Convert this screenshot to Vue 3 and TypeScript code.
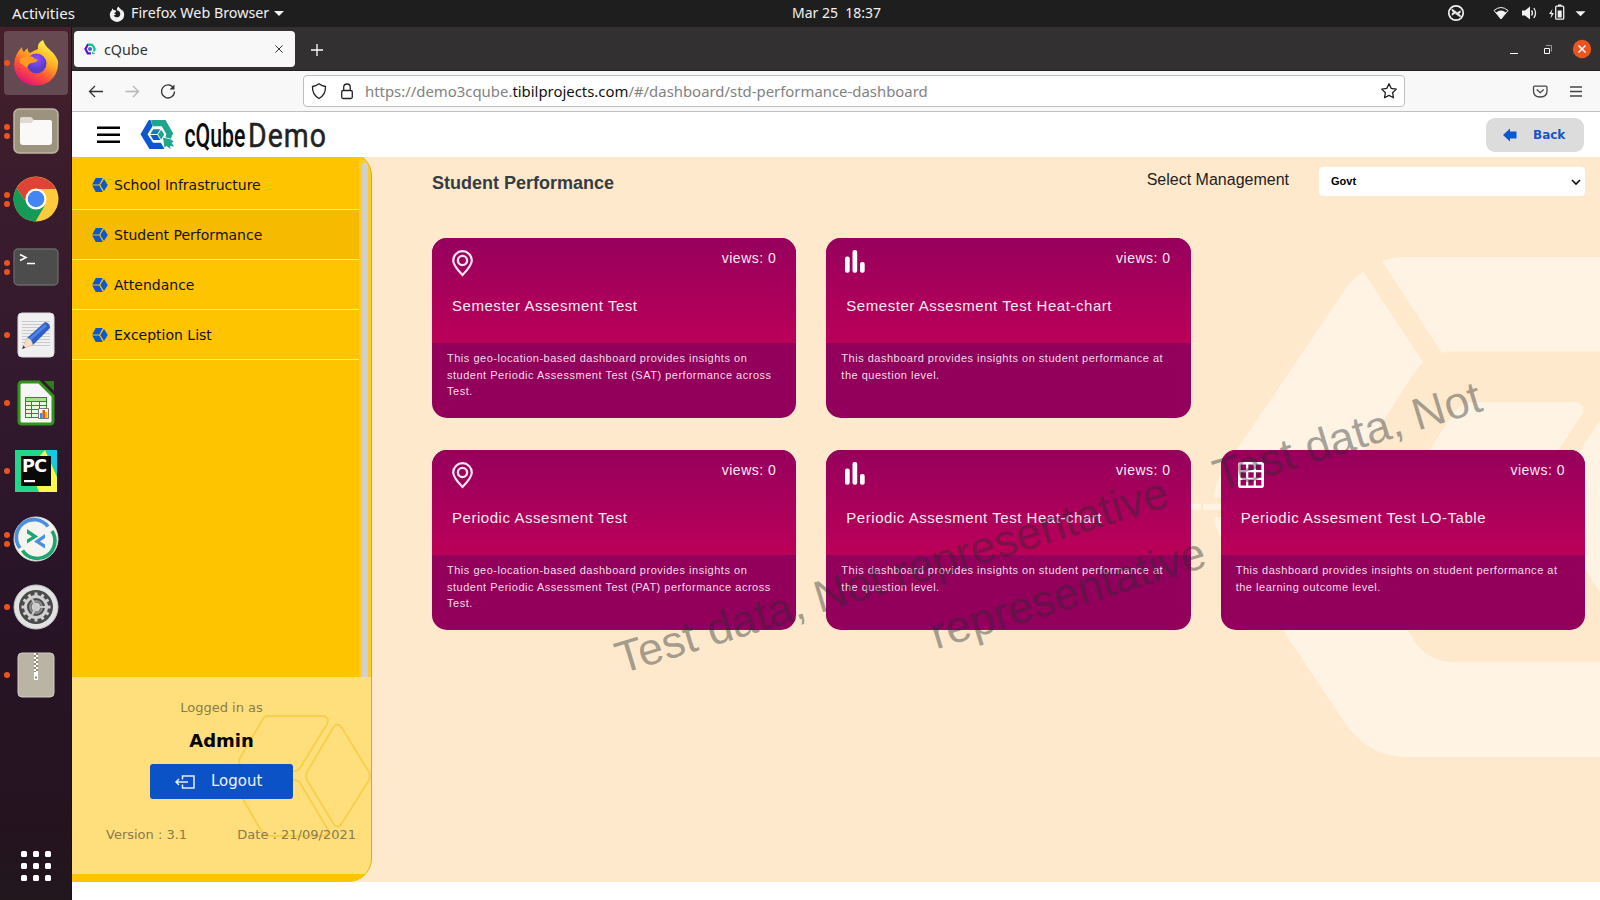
<script setup lang="ts">
interface DockApp { id: string; dots: number }
interface Card { icon: 'pin' | 'bars' | 'grid'; title: string; text: string; views: number }

const dock: DockApp[] = [
  { id: 'firefox', dots: 1 }, { id: 'files', dots: 2 }, { id: 'chrome', dots: 2 },
  { id: 'terminal', dots: 2 }, { id: 'writer', dots: 1 }, { id: 'calc', dots: 1 },
  { id: 'pycharm', dots: 1 }, { id: 'remmina', dots: 2 }, { id: 'settings', dots: 1 },
  { id: 'archive', dots: 1 },
]
const menu: string[] = ['School Infrastructure', 'Student Performance', 'Attendance', 'Exception List']
const active = 'Student Performance'

const rows: Card[][] = [
  [
    { icon: 'pin', title: 'Semester Assesment Test', views: 0, text: 'This geo-location-based dashboard provides insights on student Periodic Assessment Test (SAT) performance across Test.' },
    { icon: 'bars', title: 'Semester Assesment Test Heat-chart', views: 0, text: 'This dashboard provides insights on student performance at the question level.' },
  ],
  [
    { icon: 'pin', title: 'Periodic Assesment Test', views: 0, text: 'This geo-location-based dashboard provides insights on student Periodic Assessment Test (PAT) performance across Test.' },
    { icon: 'bars', title: 'Periodic Assesment Test Heat-chart', views: 0, text: 'This dashboard provides insights on student performance at the question level.' },
    { icon: 'grid', title: 'Periodic Assesment Test LO-Table', views: 0, text: 'This dashboard provides insights on student performance at the learning outcome level.' },
  ],
]
const teeth: number[] = Array.from({ length: 12 }, (_, i) => i * 30)
</script>

<template>
  <div class="screen">
    <header class="topbar">
      <span class="activities">Activities</span>
      <svg class="ff-mini" viewBox="0 0 16 16"><path d="M3.2 2.2 2.8 4.4C1.6 5.4.8 7 .8 8.7a7.2 7.2 0 0 0 14.4 0c0-2.2-.8-3.8-2-5l.2 1.5C12.500 3 10 2.500 9.600.6 8.200 1.600 7.700 3 8 4.200c2 .4 3.300 1.700 3.300 3.800a3.500 3.500 0 0 1-6.800 1c.8.5 1.900.4 2.600-.4-1.300-.1-1.800-.9-1.500-1.800l1.700-1-.9-1.500-1.900-.4z" fill="#f2f2f2" /></svg>
      <span class="appname">Firefox Web Browser</span>
      <svg class="caret" viewBox="0 0 10 5"><path d="M0 0h10L5 5z" fill="#f2f2f2" /></svg>
      <span class="clock">Mar 25&nbsp; 18:37</span>
      <svg class="tray" viewBox="0 0 150 27" fill="none" stroke="#f2f2f2">
        <circle cx="16" cy="13" r="7.200" stroke-width="1.700" />
        <path d="M12 9l4.800 3.200-4.800 3v-1.800l2-1.200-2-1.300zM20.300 10.800v1.800l-2 1.300 2 1.200V17l-4.800-3.200z" fill="#f2f2f2" stroke-width=".6" />
        <path d="M54 10.500Q61 4.500 68 10.500L61 19z" stroke-width="1" />
        <path d="M56 12.500Q61 8.500 66 12.500L61 19z" fill="#f2f2f2" stroke="none" />
        <path d="M82 10.500h3l5-4v13l-5-4h-3z" fill="#f2f2f2" stroke="none" />
        <path d="M91.500 10.500q2 2.500 0 5M93.800 8q3.500 5 0 10" stroke-width="1.300" />
        <path d="M112.500 9l-3.500 5h2.500l-1 4.500 3.500-5.500h-2.500z" fill="#f2f2f2" stroke="none" />
        <rect x="115.700" y="6.200" width="8" height="13" rx="1" stroke-width="1.300" />
        <path d="M117.700 10.500h4v7h-4zM118 4.500h3.500v1.500H118z" fill="#f2f2f2" stroke="none" />
        <path d="M135.500 11.200h10l-5 5z" fill="#f2f2f2" stroke="none" />
      </svg>
    </header>

    <div class="below">
      <nav class="dock">
        <div v-for="app in dock" :key="app.id" class="slot" :class="{ focused: app.id === 'firefox' }">
          <span class="dots"><i v-for="n in app.dots" :key="n" /></span>
          <svg viewBox="0 0 46 46" class="app-icon">
            <g v-if="app.id === 'firefox'">
              <defs>
                <linearGradient id="fx" x1=".8" y1=".1" x2=".3" y2="1"><stop offset="0" stop-color="#fff04a" /><stop offset=".35" stop-color="#ffb023" /><stop offset=".65" stop-color="#ff5634" /><stop offset="1" stop-color="#e3107a" /></linearGradient>
                <radialGradient id="fg" cx=".5" cy=".3"><stop offset="0" stop-color="#9250ff" /><stop offset="1" stop-color="#5a3ccc" /></radialGradient>
              </defs>
              <path d="M9 7Q9 11 11 12Q13 9 15 8Q14 11 17 13Q20 11 25 9Q24 3 30 0Q32 6 36 9L38 11Q42 14 45 21Q46 34 36 42Q23 49 10 42Q1 35 1 24Q2 14 9 7z" fill="url(#fx)" />
              <circle cx="23.500" cy="23.500" r="10" fill="url(#fg)" />
              <path d="M7 19Q13 14 20 17Q22 20 25 20Q23 23 18 23Q15 24 14 28Q11 25 7 23z" fill="#ff9a20" />
            </g>
            <g v-else-if="app.id === 'files'">
              <rect x="1" y="1" width="44" height="44" rx="5" fill="#9c937f" stroke="#bdb6a2" stroke-width="1.500" />
              <path d="M7 19V11q0-2 2-2h9l4 4h14q3 0 3 3z" fill="#dedad0" />
              <path d="M7 15h11l3-3h16q2 0 2 2v20q0 3-3 3H10q-3 0-3-3z" fill="#faf9f7" />
            </g>
            <g v-else-if="app.id === 'chrome'">
              <circle cx="23" cy="23" r="22.500" fill="#ffcb3c" />
              <path d="M3.500 12A22.500 22.500 0 0 1 43 13H23A10.500 10.500 0 0 0 13 26z" fill="#dd4437" />
              <path d="M3.500 12A22.500 22.500 0 0 0 22.500 45.500L32 29Q25 36 17 31Q14 29 13 26z" fill="#159a57" />
              <circle cx="23" cy="23" r="10.500" fill="#fff" /><circle cx="23" cy="23" r="8.300" fill="#4285f4" />
            </g>
            <g v-else-if="app.id === 'terminal'">
              <rect x="1" y="5" width="44" height="36" rx="4" fill="#4c4c4c" stroke="#686868" stroke-width="1.300" />
              <path d="M7 10.500l6 3-6 3M14 19.500h8" fill="none" stroke="#fff" stroke-width="1.600" />
            </g>
            <g v-else-if="app.id === 'writer'">
              <rect x="5" y="1" width="36" height="44" rx="4" fill="#f0f0f0" stroke="#dcdcdc" />
              <path d="M9 9.500h28M9 12.500h28M9 15.500h28M9 18.500h28M9 21.500h28M9 24.500h28M9 27.500h28M9 30.500h28M9 33.500h28" stroke="#cacaca" />
              <path d="M9 37l5-11 18-16q5 1 5 6L20 33z" fill="#2d5fc4" />
              <path d="M16 28l17-15" stroke="#4f83e6" stroke-width="3" /><path d="M9 37l5-11q5 1 6 7z" fill="#fbdcbf" /><path d="M9 37l1.400-3.200 2 1.700z" fill="#333" />
            </g>
            <g v-else-if="app.id === 'calc'">
              <path d="M9 2h17l14 14v25q0 3-3 3H9q-3 0-3-3V5q0-3 3-3z" fill="#f6f6f6" stroke="#32931d" stroke-width="3" />
              <path d="M31 1h10v10z" fill="#2a7f19" />
              <path d="M12 17h22v21H12z" fill="#2f8c1e" />
              <path d="M13 18h20v3H13z" fill="#a4e388" />
              <path d="M13 22h5v3h-5zM19 22h7v3h-7zM27 22h6v3h-6zM13 26h5v3h-5zM19 26h7v3h-7zM27 26h6v3h-6zM13 30h5v3h-5zM19 30h7v3h-7zM13 34h5v3h-5zM19 34h7v3h-7z" fill="#e8fbe0" />
              <path d="M25.500 28.500h10v10h-10z" fill="#fff" stroke="#777" />
              <path d="M27 33h2.500v5H27z" fill="#2196f3" /><path d="M29.500 30h2.500v8h-2.500z" fill="#e4571b" /><path d="M32 32h2.500v6H32z" fill="#ffb300" />
            </g>
            <g v-else-if="app.id === 'pycharm'">
              <path d="M2 2h42v42H2z" fill="#21d789" /><path d="M16 20L32 2l12 27v15H26z" fill="#fcf84a" /><path d="M33 2h11v24z" fill="#12c9e6" />
              <path d="M8 8h30v30H8z" fill="#090909" />
              <text x="9" y="24" class="pc">PC</text>
              <path d="M11 32h11v2.200H11z" fill="#fff" />
            </g>
            <g v-else-if="app.id === 'remmina'">
              <circle cx="23" cy="23" r="22" fill="#f6f4ef" stroke="#dedbd2" />
              <g fill="none" stroke-width="3.600"><path d="M7 32A17.500 17.500 0 0 1 35 10.500" stroke="#4a90df" /><path d="M39 15A17.500 17.500 0 0 1 9.500 34.500" stroke="#1da672" /></g>
              <path d="M14 13l11 7.500-11 7v-4l5-3-5-3z" fill="#1da672" /><path d="M32 18v4l-5 3.500 5 3v4l-11-7z" fill="#4a90df" />
            </g>
            <g v-else-if="app.id === 'settings'">
              <circle cx="23" cy="23" r="22" fill="#e2e2e2" stroke="#c5c5c5" /><circle cx="23" cy="23" r="17" fill="#4a4a4a" />
              <path v-for="a in teeth" :key="a" d="M21.500 8.500h3v4h-3z" :transform="`rotate(${a} 23 23)`" fill="#d0d0d0" />
              <circle cx="23" cy="23" r="10.500" fill="none" stroke="#d0d0d0" stroke-width="3" />
              <circle cx="23" cy="23" r="6" fill="none" stroke="#8c8c8c" stroke-width="2" />
              <circle cx="23" cy="23" r="4.500" fill="#cfcfcf" /><path d="M23 23l-4-8M23 23h9M23 23l-4 8" stroke="#c8c8c8" stroke-width="2" />
            </g>
            <g v-else>
              <rect x="5" y="1" width="36" height="44" rx="4" fill="#bab4a5" stroke="#d3cec2" />
              <path d="M21 1h4v20h-4z" fill="#8d8778" /><path d="M21 1h2v2h-2zM23 3h2v2h-2zM21 5h2v2h-2zM23 7h2v2h-2zM21 9h2v2h-2zM23 11h2v2h-2zM21 13h2v2h-2zM23 15h2v2h-2zM21 17h2v2h-2zM23 19h2v2h-2z" fill="#fff" />
              <path d="M21 20h4v8h-4z" fill="#fff" /><path d="M22 24.500h2v2h-2z" fill="#8d8778" />
            </g>
          </svg>
        </div>
        <div class="launcher"><i v-for="n in 9" :key="n" /></div>
      </nav>

      <section class="browser">
        <div class="tabstrip">
          <div class="tab">
            <svg viewBox="0 0 12 12" class="favicon"><path d="M7 1.800H3.800L1.400 6l2.400 4.300H7" fill="none" stroke="#5a14d2" stroke-width="2.200" /><path d="M4 1.800h4.300L10.700 6l-.8 2.500" fill="none" stroke="#1bbf9a" stroke-width="2.200" /><path d="M8 8.500l3.500 2.500H8z" fill="#1bbf9a" /><circle cx="6" cy="6" r="2" fill="#3a64cf" /></svg>
            <span>cQube</span>
            <svg viewBox="0 0 8 8" class="tab-x"><path d="M.4.4l7.200 7.200M7.600.4L.4 7.600" stroke="#333" /></svg>
          </div>
          <svg viewBox="0 0 12 12" class="plus"><path d="M6 0v12M0 6h12" stroke="#fff" stroke-width="1.300" /></svg>
          <div class="win">
            <svg viewBox="0 0 90 20"><path d="M4 14.500h8" stroke="#fff" /><path d="M38.500 9.500h5v5h-5z" fill="none" stroke="#fff" /><path d="M40 6.500h5.500v6" fill="none" stroke="#999" /><circle cx="76" cy="10" r="9.200" fill="#e95420" /><path d="M72.500 6.500l7 7M79.500 6.500l-7 7" stroke="#fff" stroke-width="1.500" /></svg>
          </div>
        </div>

        <div class="toolbar">
          <svg class="nav" viewBox="0 0 110 40" fill="none" stroke="#333" stroke-width="1.300">
            <path d="M17.500 20.500h13.500M23 15l-5.500 5.500L23 26" />
            <path d="M53.500 20.500h13M61 15l5.500 5.500L61 26" stroke="#b5b5b5" />
            <path d="M101.500 17A6.500 6.500 0 1 0 102.500 20.500" /><path d="M102.500 13.500v5h-5z" fill="#333" stroke="none" />
          </svg>
          <div class="url">
            <svg class="url-icons" viewBox="0 0 46 30" fill="none" stroke="#222" stroke-width="1.300"><path d="M15 7.700q3 2.300 6.500 2.800Q22 18.500 15 22.500Q8 18.500 8.500 10.500Q12 10 15 7.700z" /><rect x="37.700" y="14.500" width="10.600" height="8" rx="1.500" /><path d="M39.700 14.500v-3q0-3.500 3.300-3.500t3.300 3.500v3" /></svg>
            <span class="addr">https://demo3cqube.<b>tibilprojects.com</b>/#/dashboard/std-performance-dashboard</span>
            <svg class="star" viewBox="0 0 18 18"><path d="M9 1.700l2.200 4.700 5.100.7-3.700 3.600.9 5.100L9 13.400l-4.500 2.400.9-5.100L1.700 7.100l5.100-.7z" fill="none" stroke="#222" stroke-width="1.300" stroke-linejoin="round" /></svg>
          </div>
          <svg class="tools" viewBox="0 0 60 20" fill="none" stroke="#444" stroke-width="1.300"><path d="M4.700 4.200h11q1.300 0 1.300 1.300V9q0 6-6.800 6Q3.500 15 3.500 9V5.500q0-1.300 1.200-1.300zM6.700 7.500l3.500 3.200 3.500-3.200M40 5h12M40 9.500h12M40 14h12" /></svg>
        </div>

        <div class="apphead">
          <svg class="burger" viewBox="0 0 24 18"><path d="M0 1.700h23M0 8.700h23M0 15.700h23" stroke="#000" stroke-width="2.400" /></svg>
          <svg class="brand" viewBox="0 0 200 40">
            <g transform="translate(-1.500 0)">
              <path d="M10.300 5L2 19.300 11 34h15l-3.600-6.300H14.500L9 19.300l5-8L12 5z" fill="#0b57cf" />
              <path d="M12.700 5H27l7.600 13.300-2.300 5.500-5.500-1.500 1-3-4.500-8H14.500L13 8.500z" fill="#1fa58d" />
              <path d="M24.500 22.500l8 2 2.500 2-2 1.500 2.500 3.500-4-.5.500 3-4-3-2 1.500z" fill="#1fa58d" />
              <path d="M14.800 14.300h7l-3 4.800h-7z" fill="#1c78b8" /><path d="M11.800 20h7l3 5h-7z" fill="#0b57cf" /><path d="M22.700 14.700l3 4.900-3 4.900-3.200-4.900z" fill="#1fa58d" />
            </g>
            <g transform="translate(44.500 31.500) scale(.625 1)"><text class="cq">cQube</text></g>
            <g transform="translate(108 31.500) scale(.86 1)"><text class="demo">Demo</text></g>
          </svg>
          <button class="back"><svg viewBox="0 0 14 14"><path d="M0 7l7-6.500v3h6.500v7H7v3z" fill="#0b57cf" /></svg>Back</button>
        </div>

        <div class="content">
          <aside class="side">
            <div class="scroller">
              <ul>
                <li v-for="m in menu" :key="m" :class="{ on: m === active }">
                  <svg viewBox="0 0 16 14"><path d="M3.800 0h7L7.300 6.400H.2zM.2 7.400h7.100l3.500 6.600h-7zM12 1l3.800 6L12 13 8.300 7z" fill="#0b57cf" /></svg>{{ m }}
                </li>
              </ul>
              <div class="track"><i /></div>
            </div>
            <div class="foot">
              <svg class="hex" viewBox="0 0 134 122" fill="none" stroke="#f8cf4f" stroke-width="2">
                <path d="M2 49Q0 46 2 43L25 4Q27 1 30 1H85Q92 2 89 9L62 53Q60 56 55 56H20M20 65H55Q60 65 62 68L89 113Q92 119 85 121H30Q26 120 24 117L2 79M95 13Q99 6 104 13L131 57Q133 61 131 65L104 108Q99 115 95 108L69 65Q67 61 69 57z" />
              </svg>
              <p class="muted">Logged in as</p>
              <p class="admin">Admin</p>
              <button class="logout"><svg viewBox="0 0 20 14" fill="none" stroke="#e4edfb" stroke-width="1.500"><path d="M7.500 4.500V1h11.500v12H7.500V9.500M13 7H1M4 4L1 7l3 3" /></svg>Logout</button>
              <div class="meta"><span>Version : 3.1</span><span>Date : 21/09/2021</span></div>
            </div>
          </aside>

          <main class="main">
            <svg class="bg" viewBox="1172 157 428 725" fill="#fff4e4">
              <g transform="translate(0 -3.400) scale(1 1.0142)">
                <path d="M1363 271L1423.300 360.700Q1418 365 1412 374L1340 484Q1335 490 1335 494H1214Q1215 480 1223 467L1343 292Q1350 281 1363 271z" />
                <path d="M1214 513.300H1335Q1337 520 1341 526L1411 630Q1425 656 1452 656H1600V749.700H1403Q1367 748 1345 716L1224 538Q1215 525 1214 513.300z" />
                <path d="M1382 261Q1392 257 1403 256.700H1600V350H1447L1442 351.300z" />
                <path d="M1400 492L1452 413Q1460 400 1473 399.700H1575Q1584 401 1583.500 409L1530 490z" />
                <path d="M1600 418L1545 500L1600 588z" /><path d="M1172 500h29v6h-29zM1203 500h30v6h-30z" />
              </g>
            </svg>
            <div class="bar">
              <h1>Student Performance</h1>
              <label>Select Management</label>
              <div class="select">Govt<svg viewBox="0 0 10 7"><path d="M1 1l4 4 4-4" fill="none" stroke="#111" stroke-width="1.700" /></svg></div>
            </div>
            <div v-for="(row, r) in rows" :key="r" class="cards">
              <article v-for="c in row" :key="c.title" class="card">
                <div class="top">
                  <div class="line">
                    <svg v-if="c.icon === 'pin'" class="pin" viewBox="0 0 21 27" fill="none" stroke="#f9e8f2"><path d="M10.500 25Q1.200 15.500 1.200 10.500a9.300 9.300 0 0 1 18.600 0Q19.800 15.500 10.500 25z" stroke-width="2.200" /><circle cx="10.500" cy="10.500" r="4.600" stroke-width="2.300" /></svg>
                    <svg v-else-if="c.icon === 'bars'" class="bars" viewBox="0 0 20 23" fill="#fff"><rect x="0" y="6.500" width="4.700" height="16.200" rx="2" /><rect x="7.500" y="0" width="4.700" height="22.700" rx="2" /><rect x="15" y="12" width="4.700" height="10.700" rx="2" /></svg>
                    <svg v-else class="gridi" viewBox="0 0 26 26" fill="none" stroke="#fff"><rect x="1.300" y="1.300" width="23.400" height="23.400" rx="1.500" stroke-width="2.600" /><path d="M9.200 1v24M16.800 1v24M1 9.200h24M1 16.800h24" stroke-width="2.200" /></svg>
                    <span>views: {{ c.views }}</span>
                  </div>
                  <h2>{{ c.title }}</h2>
                </div>
                <p>{{ c.text }}</p>
              </article>
            </div>
          </main>
        </div>
      </section>
    </div>

    <svg class="watermark" viewBox="0 0 1600 900">
      <text transform="translate(621 674) rotate(-17)">Test data, Not representative</text>
      <text transform="translate(1219 491.500) rotate(-17)">Test data, Not</text>
      <text transform="translate(936 649.500) rotate(-17)">representative</text>
    </svg>
  </div>
</template>

<style>
body { margin: 0; }
</style>

<style scoped>
* { box-sizing: border-box; }
.screen { position: relative; width: 1600px; height: 900px; overflow: hidden; display: flex; flex-direction: column; background: #fff; font-family: "DejaVu Sans", sans-serif; }
.topbar { height: 27px; background: #1e1e1e; color: #f2f2f2; display: flex; align-items: center; font: 15px "Noto Sans", sans-serif; flex: none; }
.topbar span { padding-bottom: 2px; }
.activities { margin-left: 12px; width: 97px; font-size: 15.100px; }
.ff-mini { width: 16px; height: 16px; }
.appname { margin-left: 6px; width: 138px; font-size: 14.300px; white-space: nowrap; }
.caret { width: 10px; height: 5px; margin-left: 5px; }
.clock { margin-left: 508px; font-size: 14px; white-space: nowrap; width: 100px; }
.tray { margin-left: auto; width: 150px; height: 27px; margin-right: 10px; }
.below { flex: 1; display: flex; min-height: 0; }
.dock { width: 72px; flex: none; display: flex; flex-direction: column; padding-top: 2px; background: linear-gradient(#46202a 0, #3a1c2c 150px, #341a2e 330px, #281427 560px, #24131f 800px, #21171d 873px); border-right: 1px solid #1c1016; }
.slot { height: 68px; display: flex; align-items: center; position: relative; flex: none; }
.slot.focused::before { content: ""; position: absolute; left: 4px; top: 2px; width: 64px; height: 64px; background: #ffffff30; border-radius: 4px; }
.dots { width: 14px; display: flex; flex-direction: column; align-items: flex-end; padding-right: 4px; gap: 3px; position: relative; }
.dots i { width: 6px; height: 6px; border-radius: 50%; background: #e95420; }
.app-icon { width: 46px; height: 46px; margin-left: -1px; position: relative; }
.pc { font: bold 17.500px "DejaVu Sans", sans-serif; letter-spacing: -.5px; fill: #fff; }
.launcher { margin: auto 0 19px 21px; display: grid; grid-template-columns: repeat(3, 6px); gap: 6px; }
.launcher i { width: 6px; height: 6px; border-radius: 1.500px; background: #fff; }
.browser { flex: 1; display: flex; flex-direction: column; min-width: 0; }
.tabstrip { height: 44px; background: #333031; border-bottom: 1px solid #232122; display: flex; align-items: flex-start; padding: 4px 0 0 2px; flex: none; }
.tab { width: 221px; height: 36px; background: #f8f8f8; border-radius: 4px; display: flex; align-items: center; padding: 0 12px 0 10px; font: 14.300px "Noto Sans", sans-serif; color: #333; }
.favicon { width: 12px; height: 12px; margin-right: 8px; }
.tab-x { width: 8px; height: 8px; margin-left: auto; }
.plus { width: 12px; height: 12px; margin: 13px 0 0 16px; }
.win { margin-left: auto; padding: 8px 4px 0 0; }
.win svg { width: 90px; height: 20px; display: block; }
.toolbar { height: 41px; background: #f8f8f8; border-bottom: 1px solid #c0c0c2; display: flex; align-items: flex-start; flex: none; }
.nav { width: 110px; height: 40px; }
.url { margin: 4px 0 0 121px; width: 1102px; height: 32px; background: #fff; border: 1px solid #bebebe; border-radius: 4px; display: flex; align-items: center; }
.url-icons { width: 46px; height: 30px; overflow: visible; }
.addr { margin-left: 15px; font: 14.900px "Noto Sans", sans-serif; color: #828282; white-space: nowrap; }
.addr b { font-weight: 400; color: #111; }
.star { width: 18px; height: 18px; margin: 0 6px 0 auto; }
.tools { width: 60px; height: 20px; margin: 11px 0 0 125px; }
.apphead { height: 45px; display: flex; align-items: center; background: #fff; flex: none; }
.burger { width: 24px; height: 18px; margin-left: 25px; }
.brand { width: 200px; height: 40px; margin-left: 19px; }
.cq { font: 500 34px "Roboto", sans-serif; fill: #0a0a0a; }
.demo { font: 400 33px "Roboto", sans-serif; letter-spacing: 1.200px; fill: #222; stroke: #222; stroke-width: .5px; }
.back { margin: 0 16px 0 auto; width: 98px; height: 34px; border: 0; border-radius: 9px; background: #dcdcdc; color: #1656c4; font: bold 12px "DejaVu Sans", sans-serif; display: flex; align-items: center; padding: 0 0 0 17px; }
.back svg { width: 14px; height: 14px; margin-right: 16px; }
.content { height: 725px; flex: none; display: flex; background: #ffe9cc; overflow: hidden; }
.side { width: 300px; height: 730px; margin-top: -5px; padding-top: 5px; background: #fec400; border-radius: 0 24px 24px 0; border-right: 1px solid #dcaa10; overflow: hidden; display: flex; flex-direction: column; }
.scroller { height: 520px; display: flex; flex: none; }
ul { list-style: none; margin: 0; padding: 3px 0 0; width: 287px; }
li { height: 50px; border-bottom: 1px solid #ffef80; display: flex; align-items: center; padding-left: 20px; font-size: 14px; color: #111; }
li svg { width: 16px; height: 14px; margin-right: 6px; }
li.on { background: #f6bb00; }
.track { width: 12px; background: #fecb2c; margin-top: 3px; padding: 3px 0 0 3px; display: flex; }
.track i { width: 6px; background: #d0d0d0; border-radius: 3px 3px 0 0; }
.foot { height: 197px; background: #ffdf7b; position: relative; display: flex; flex-direction: column; align-items: center; }
.foot p { margin: 0; position: relative; }
.hex { position: absolute; left: 166px; top: 38px; width: 134px; height: 122px; }
.muted { padding-top: 22px; font-size: 13px; line-height: 17px; color: #8a7a4c; }
.admin { padding-top: 14px; font-size: 18px; line-height: 22px; font-weight: 700; color: #000; }
.logout { position: relative; margin-top: 12px; width: 143px; height: 35px; border: 0; border-radius: 3px; background: #0b52c6; color: #eef4ff; font: 15px "DejaVu Sans", sans-serif; display: flex; align-items: center; padding: 0 0 2px 25px; }
.logout svg { width: 20px; height: 14px; margin: 3px 16px 0 0; }
.meta { position: relative; display: flex; align-self: stretch; justify-content: space-between; padding: 27px 15px 0 34px; font-size: 13px; line-height: 17px; color: #8a7a4c; }
.main { flex: 1; position: relative; padding: 0 15px 0 60px; }
.bg { position: absolute; right: 0; top: 0; width: 428px; height: 725px; }
.bar { position: relative; display: flex; height: 81px; font-family: "Liberation Sans", sans-serif; }
h1 { margin: 16px 0 0; font-size: 18px; line-height: 21px; color: #343c44; }
label { margin: 13px 30px 0 auto; font-size: 16px; line-height: 19px; color: #222; }
.select { margin-top: 10px; width: 266px; height: 29px; border-radius: 4px; background: #fff; font-weight: 700; font-size: 11px; color: #000; display: flex; align-items: center; justify-content: space-between; padding: 0 4px 1px 12px; }
.select svg { width: 10px; height: 7px; margin-top: 2px; }
.cards { position: relative; display: grid; grid-template-columns: repeat(3, 1fr); gap: 30px; margin-bottom: 32px; font-family: "Liberation Sans", sans-serif; }
.card { height: 180px; border-radius: 15px; background: #92005b; overflow: hidden; color: #fbeaf4; }
.top { height: 105px; background: linear-gradient(#96005d, #bb0059); padding: 12px 20px 0; }
.line { display: flex; justify-content: space-between; height: 28px; }
.line span { font-size: 14px; letter-spacing: .5px; line-height: 16px; }
.pin { width: 21px; height: 27px; }
.bars { width: 20px; height: 23px; margin-left: -1px; }
.gridi { width: 26px; height: 26px; margin-left: -3px; }
h2 { margin: 19px 0 0; font-size: 15px; font-weight: 400; letter-spacing: .54px; line-height: 18px; white-space: nowrap; }
.card p { margin: 0; padding: 7px 15px; font-size: 11px; letter-spacing: .51px; line-height: 16.500px; color: #f6dcea; }
.watermark { position: absolute; inset: 0; width: 1600px; height: 900px; pointer-events: none; }
.watermark text { font: 45px "Liberation Sans", sans-serif; fill: rgba(38, 44, 50, .41); }
</style>
